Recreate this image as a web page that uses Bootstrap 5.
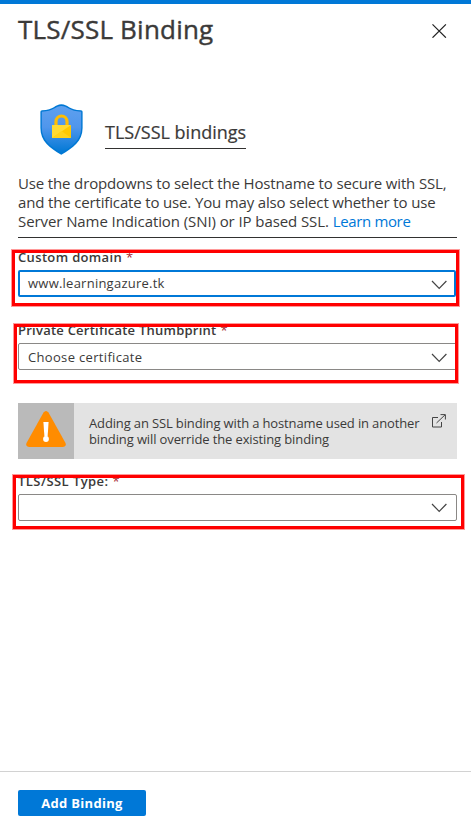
<!DOCTYPE html>
<html lang="en">
<head>
<meta charset="utf-8">
<meta name="viewport" content="width=device-width, initial-scale=1">
<title>TLS/SSL Binding</title>
<link href="https://cdn.jsdelivr.net/npm/bootstrap@5.3.0/dist/css/bootstrap.min.css" rel="stylesheet">
<style>
body{font-family:"Open Sans","Noto Sans",sans-serif;color:#3b3a39;background:#fff;overflow:hidden}
.blade{height:831px;border-top:4px solid #0078d7}
.blade-head{height:96px;padding:7px 24px 0 18px}
.blade-title{font-size:26px;line-height:36px;font-weight:500;margin:0;letter-spacing:.2px;-webkit-text-stroke:.4px #3b3a39}
.close-x{margin-top:12px}
.blade-body{padding:0 14px 0 18px}
.hero{height:74px;padding-left:22px}
.hero-title{font-size:18px;line-height:25px;margin:20px 0 0 22px;height:29px;border-bottom:1px solid #323130;font-weight:500;width:141px;-webkit-text-stroke:.2px #3b3a39}
.intro{font-size:15px;line-height:19px;height:64px;border-bottom:1px solid #323130}
.intro a{color:#0078d7}
.ln{white-space:nowrap}
.field{position:relative}
.f1{margin-top:10px}.f2{margin-top:24px}.f3{margin-top:13px}
.field-label{font-size:13px;line-height:18px;height:22px;font-weight:600;display:block;white-space:nowrap}
.req{color:#a4262c;font-weight:400;margin-left:4px}
.pick{height:27px;border:1px solid #8a8886;border-radius:2px;padding:1px 9px 0;font-size:13px;background:#fff}
.pick.active{border:2px solid #0078d7;padding:0 7px 0 8px;width:438px}
.pick.active svg{margin-top:2px}
.f2 .pick{padding-top:2px}
.marker{position:absolute;border:3px solid #f00;box-shadow:0 0 0 1px rgba(255,0,0,.4);pointer-events:none}
.m1{left:-6px;top:2px;width:447px;height:56px}
.m2{left:-4px;top:3px;width:444px;height:59px}
.m3{left:-5px;top:3px;width:451px;height:54px}
.notice{margin-top:33px;height:56px;background:#e3e3e3;font-size:13px;line-height:16px}
.notice-icon{width:56px;background:#bababa;padding-bottom:4px}
.notice-text{padding:12px 0 0 15px}
.ext{margin:11px 11px 0 auto}
.blade-foot{border-top:1px solid #d2d2d2;height:60px;padding:18px 18px 0}
.btn-add{display:block;background:#0078d7;color:#fff;width:128px;height:26px;border-radius:2px;font-size:13px;font-weight:700;padding:0;line-height:23px}
.t2{letter-spacing:-.145px}.t3{letter-spacing:-.155px}.t4{letter-spacing:-.085px}.t5{letter-spacing:-.36px}
.t6{letter-spacing:.35px}.t7{letter-spacing:.24px}.t8{letter-spacing:.24px}.t9{letter-spacing:.33px}
.t10{letter-spacing:-.14px}.t11{letter-spacing:-.12px}.t12{letter-spacing:.44px}.t13{letter-spacing:.3px}
</style>
<script src="https://cdn.jsdelivr.net/npm/bootstrap@5.3.0/dist/js/bootstrap.bundle.min.js"></script>
</head>
<body>
<main class="blade d-flex flex-column">
  <header class="blade-head d-flex justify-content-between align-items-start">
    <h1 class="blade-title">TLS/SSL Binding</h1>
    <svg class="close-x" width="15" height="15" viewBox="0 0 15 15" stroke="#222" stroke-width="1.2"><path d="M.5 1.300l13.400 13.400M13.900 1.300L.5 14.700"/></svg>
  </header>
  <div class="blade-body flex-grow-1">
    <div class="hero d-flex align-items-start">
      <svg class="mt-1" width="43" height="51" viewBox="0 0 43 51">
        <defs><linearGradient id="sh" x1="0" y1="0" x2="0" y2="1"><stop offset="0" stop-color="#5ea0ef"/><stop offset=".45" stop-color="#5096ec"/><stop offset="1" stop-color="#0078d4"/></linearGradient></defs>
        <path d="M21.3.2C28 .2 29 6 41 6.200q1.600 0 1.600 1.600V24C42.600 37 33 44 21.300 50.800 9.600 44 .4 37 .4 24V7.800q0-1.600 1.600-1.600C14 6 15 .2 21.300.2z" fill="#0078d4"/>
        <path d="M21.300 2C27.500 2 29.500 7.400 41.200 7.700V24c0 12-9 18.600-19.900 25C10.600 42.600 1.800 36 1.800 24V7.700C13.500 7.400 15.500 2 21.300 2z" fill="url(#sh)"/>
        <path d="M16 22v-4.500a5.500 5.500 0 0 1 11 0V22" fill="none" stroke="#ffbd02" stroke-width="3.200"/>
        <rect x="12" y="21" width="19" height="13" rx=".6" fill="#ffc800"/>
        <path d="M12 21h19L12 34z" fill="#ffdb33"/><path d="M12 34l9.500-7L31 34z" fill="#ffd21a"/>
      </svg>
      <h2 class="hero-title ln">TLS/SSL bindings</h2>
    </div>
    <div class="intro">
      <div class="ln t2">Use the dropdowns to select the Hostname to secure with SSL,</div>
      <div class="ln t3">and the certificate to use. You may also select whether to use</div>
      <div class="ln"><span class="t4">Server Name Indication (SNI) or IP based SSL.</span> <a href="#" class="t5 text-decoration-none">Learn more</a></div>
    </div>
    <div class="field f1">
      <label class="field-label"><span class="t6">Custom domain</span><span class="req">*</span></label>
      <div class="pick active d-flex align-items-center justify-content-between"><span class="ln t7">www.learningazure.tk</span>
        <svg width="16" height="10" viewBox="0 0 16 10" fill="none" stroke="#444" stroke-width="1.200"><path d="M1 1l7.200 7.400L15.400 1"/></svg></div>
      <div class="marker m1"></div>
    </div>
    <div class="field f2">
      <label class="field-label"><span class="t8">Private Certificate Thumbprint</span><span class="req">*</span></label>
      <div class="pick d-flex align-items-center justify-content-between"><span class="ln t9">Choose certificate</span>
        <svg width="16" height="10" viewBox="0 0 16 10" fill="none" stroke="#444" stroke-width="1.200"><path d="M1 1l7.200 7.400L15.400 1"/></svg></div>
      <div class="marker m2"></div>
    </div>
    <div class="notice d-flex align-items-start">
      <div class="notice-icon h-100 d-flex justify-content-center align-items-center">
        <svg width="40" height="36" viewBox="0 0 40 36"><path d="M17.500 1.500q2.500-3 5 0L39.500 32q1.200 4-3 4h-33q-4.200 0-3-4z" fill="#ff8c00"/><path d="M17.400 11h5.200l-1 14.500h-3.200z" fill="#fff"/><circle cx="20" cy="28" r="2.900" fill="#fff"/></svg>
      </div>
      <div class="notice-text"><div class="ln t10">Adding an SSL binding with a hostname used in another</div><div class="ln t11">binding will override the existing binding</div></div>
      <svg class="ext" width="15" height="14" viewBox="0 0 15 14" fill="none" stroke="#444" stroke-width="1"><path d="M7 3.500H1.500v9.500h9V8M5.500 9L14 .9M9.500.6h4.900v4.900"/></svg>
    </div>
    <div class="field f3">
      <label class="field-label"><span class="t12">TLS/SSL Type:</span><span class="req">*</span></label>
      <div class="pick d-flex align-items-center justify-content-end">
        <svg width="16" height="10" viewBox="0 0 16 10" fill="none" stroke="#444" stroke-width="1.200"><path d="M1 1l7.200 7.400L15.400 1"/></svg></div>
      <div class="marker m3"></div>
    </div>
  </div>
  <footer class="blade-foot"><button class="btn btn-add"><span class="t13">Add Binding</span></button></footer>
</main>
</body>
</html>
